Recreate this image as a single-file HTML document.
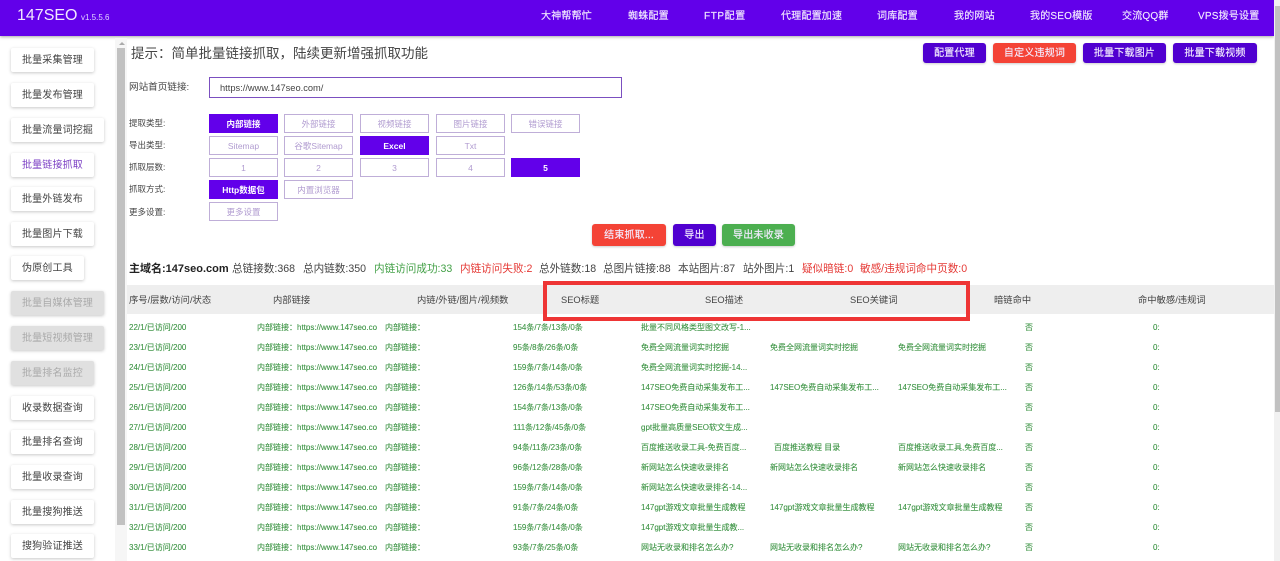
<!DOCTYPE html>
<html lang="zh-CN"><head><meta charset="utf-8"><title>147SEO</title>
<style>
html,body{margin:0;padding:0;width:1280px;height:561px;overflow:hidden;background:#fff}
body{position:relative;font-family:"Liberation Sans","Noto Sans CJK SC",sans-serif;color:#333;filter:blur(.3px)}
.a{position:absolute;white-space:nowrap}
#hd{left:0;top:0;width:1274px;height:36px;background:#6200ea;box-shadow:0 1px 3px rgba(0,0,0,.35)}
.n{top:7px;line-height:20px;font-size:10px;letter-spacing:.2px;color:#f1e8ff;-webkit-text-stroke:.15px #f1e8ff}
.s{left:11px;height:24px;line-height:25px;background:#fff;box-shadow:0 1px 3px rgba(0,0,0,.22);border-radius:2px;font-size:10px;letter-spacing:.15px;color:#444;padding-left:11px;box-sizing:border-box}
.s.d{background:#e0e0e0;color:#aaa}
.s.o{color:#7b3fc4}
.t{height:20px;top:43px;line-height:21px;border-radius:3px;color:#f3ecff;font-size:10px;letter-spacing:.2px;text-align:center;box-shadow:0 1px 2px rgba(0,0,0,.2);-webkit-text-stroke:.15px #f3ecff}
.l{left:129px;font-size:8.5px;line-height:16px;color:#444}
.b{width:69px;height:19px;line-height:18px;box-sizing:border-box;border:1px solid #bfaed8;color:#b09bd0;font-size:8.5px;text-align:center}
.b.on{background:#6200ea;border-color:#6200ea;color:#fff;font-weight:bold}
.st{top:261px;line-height:16px;font-size:10.6px;color:#444}
.h{top:292px;line-height:16px;font-size:9.3px;color:#444}
.r{left:0;width:1272px;height:20px;line-height:20px;font-size:8px;color:#3c9444;-webkit-text-stroke:.1px #3c9444;margin-top:1px}
.r span{position:absolute;top:0;white-space:nowrap}
.r .c1{left:129px}.r .c2{left:257px}.r .c3{left:385px}.r .c4{left:513px}.r .c5{left:641px}.r .c6{left:770px}.r .c7{left:898px}.r .c8{left:1025px}.r .c9{left:1153px}
</style></head><body>

<div class="a" id="hd"></div>
<div class="a" style="left:17px;top:6px;font-size:16px;line-height:20px;color:#f1e8ff">147SEO</div>
<div class="a" style="left:81px;top:11px;font-size:8px;line-height:14px;color:#e2d2ff">v1.5.5.6</div>
<div class="a n" style="left:541px">大神帮帮忙</div>
<div class="a n" style="left:628px">蜘蛛配置</div>
<div class="a n" style="left:704px;letter-spacing:.6px">FTP配置</div>
<div class="a n" style="left:781px">代理配置加速</div>
<div class="a n" style="left:877px">词库配置</div>
<div class="a n" style="left:954px">我的网站</div>
<div class="a n" style="left:1030px">我的SEO模版</div>
<div class="a n" style="left:1122px">交流QQ群</div>
<div class="a n" style="left:1198px">VPS拨号设置</div>

<div class="a" style="left:115px;top:38px;width:12px;height:523px;background:#f6f6f6"></div>
<div class="a" style="left:117px;top:48px;width:8px;height:477px;background:#c1c1c1"></div>
<div class="a" style="left:119px;top:42px;width:0;height:0;border:3px solid transparent;border-top:0;border-bottom:3px solid #aaa"></div>
<div class="a" style="left:1274px;top:0;width:6px;height:561px;background:#f1f1f1"></div>
<div class="a" style="left:1275px;top:6px;width:5px;height:406px;background:#c1c1c1"></div>

<div class="a s" style="top:48px;width:83px">批量采集管理</div>
<div class="a s" style="top:83px;width:83px">批量发布管理</div>
<div class="a s" style="top:118px;width:93px">批量流量词挖掘</div>
<div class="a s o" style="top:153px;width:83px">批量链接抓取</div>
<div class="a s" style="top:187px;width:83px">批量外链发布</div>
<div class="a s" style="top:222px;width:83px">批量图片下载</div>
<div class="a s" style="top:256px;width:73px">伪原创工具</div>
<div class="a s d" style="top:291px;width:93px">批量自媒体管理</div>
<div class="a s d" style="top:326px;width:93px">批量短视频管理</div>
<div class="a s d" style="top:361px;width:83px">批量排名监控</div>
<div class="a s" style="top:396px;width:83px">收录数据查询</div>
<div class="a s" style="top:430px;width:83px">批量排名查询</div>
<div class="a s" style="top:465px;width:83px">批量收录查询</div>
<div class="a s" style="top:500px;width:83px">批量搜狗推送</div>
<div class="a s" style="top:534px;width:83px">搜狗验证推送</div>

<div class="a" style="left:131px;top:44px;font-size:13.5px;line-height:20px;color:#444">提示：简单批量链接抓取，陆续更新增强抓取功能</div>

<div class="a t" style="left:923px;width:63px;background:#5000d0">配置代理</div>
<div class="a t" style="left:993px;width:83px;background:#f44336">自定义违规词</div>
<div class="a t" style="left:1083px;width:83px;background:#5000d0">批量下载图片</div>
<div class="a t" style="left:1173px;width:84px;background:#5000d0">批量下载视频</div>

<div class="a" style="left:129px;top:80px;font-size:9.6px;line-height:16px;color:#444">网站首页链接:</div>
<div class="a" style="left:209px;top:77px;width:413px;height:21px;box-sizing:border-box;border:1px solid #7b4fc0"></div>
<div class="a" style="left:220px;top:80px;font-size:9.3px;line-height:16px;color:#444">https://www.147seo.com/</div>

<div class="a l" style="top:115px">提取类型:</div>
<div class="a l" style="top:137px">导出类型:</div>
<div class="a l" style="top:159px">抓取层数:</div>
<div class="a l" style="top:181px">抓取方式:</div>
<div class="a l" style="top:204px">更多设置:</div>

<div class="a b on" style="left:209px;top:114px">内部链接</div>
<div class="a b" style="left:284px;top:114px">外部链接</div>
<div class="a b" style="left:360px;top:114px">视频链接</div>
<div class="a b" style="left:436px;top:114px">图片链接</div>
<div class="a b" style="left:511px;top:114px">错误链接</div>
<div class="a b" style="left:209px;top:136px">Sitemap</div>
<div class="a b" style="left:284px;top:136px">谷歌Sitemap</div>
<div class="a b on" style="left:360px;top:136px">Excel</div>
<div class="a b" style="left:436px;top:136px">Txt</div>
<div class="a b" style="left:209px;top:158px">1</div>
<div class="a b" style="left:284px;top:158px">2</div>
<div class="a b" style="left:360px;top:158px">3</div>
<div class="a b" style="left:436px;top:158px">4</div>
<div class="a b on" style="left:511px;top:158px">5</div>
<div class="a b on" style="left:209px;top:180px">Http数据包</div>
<div class="a b" style="left:284px;top:180px">内置浏览器</div>
<div class="a b" style="left:209px;top:202px">更多设置</div>

<div class="a t" style="left:592px;top:224px;width:74px;height:22px;line-height:23px;background:#f44336">结束抓取...</div>
<div class="a t" style="left:673px;top:224px;width:43px;height:22px;line-height:23px;background:#5000d0">导出</div>
<div class="a t" style="left:722px;top:224px;width:73px;height:22px;line-height:23px;background:#4caf50">导出未收录</div>

<div class="a st" style="left:129px;font-size:11px;font-weight:bold;color:#222">主域名:147seo.com</div>
<div class="a st" style="left:232px">总链接数:368</div>
<div class="a st" style="left:303px">总内链数:350</div>
<div class="a st" style="left:374px;color:#43a047">内链访问成功:33</div>
<div class="a st" style="left:460px;color:#e53935">内链访问失败:2</div>
<div class="a st" style="left:539px">总外链数:18</div>
<div class="a st" style="left:603px">总图片链接:88</div>
<div class="a st" style="left:678px">本站图片:87</div>
<div class="a st" style="left:743px">站外图片:1</div>
<div class="a st" style="left:802px;color:#e53935">疑似暗链:0</div>
<div class="a st" style="left:860px;color:#e53935">敏感/违规词命中页数:0</div>

<div class="a" style="left:127px;top:285px;width:1147px;height:29px;background:#eee"></div>
<div class="a h" style="left:129px">序号/层数/访问/状态</div>
<div class="a h" style="left:273px">内部链接</div>
<div class="a h" style="left:417px">内链/外链/图片/视频数</div>
<div class="a h" style="left:561px">SEO标题</div>
<div class="a h" style="left:705px">SEO描述</div>
<div class="a h" style="left:850px">SEO关键词</div>
<div class="a h" style="left:994px">暗链命中</div>
<div class="a h" style="left:1138px">命中敏感/违规词</div>
<div class="a" style="left:543px;top:281px;width:427px;height:40px;box-sizing:border-box;border:4px solid #ee3535"></div>

<div class="a r" style="top:317px"><span class="c1">22/1/已访问/200</span><span class="c2">内部链接：https://www.147seo.co</span><span class="c3">内部链接：</span><span class="c4">154条/7条/13条/0条</span><span class="c5">批量不同风格类型图文改写-1...</span><span class="c8">否</span><span class="c9">0:</span></div>
<div class="a r" style="top:337px"><span class="c1">23/1/已访问/200</span><span class="c2">内部链接：https://www.147seo.co</span><span class="c3">内部链接：</span><span class="c4">95条/8条/26条/0条</span><span class="c5">免费全网流量词实时挖掘</span><span class="c6">免费全网流量词实时挖掘</span><span class="c7">免费全网流量词实时挖掘</span><span class="c8">否</span><span class="c9">0:</span></div>
<div class="a r" style="top:357px"><span class="c1">24/1/已访问/200</span><span class="c2">内部链接：https://www.147seo.co</span><span class="c3">内部链接：</span><span class="c4">159条/7条/14条/0条</span><span class="c5">免费全网流量词实时挖掘-14...</span><span class="c8">否</span><span class="c9">0:</span></div>
<div class="a r" style="top:377px"><span class="c1">25/1/已访问/200</span><span class="c2">内部链接：https://www.147seo.co</span><span class="c3">内部链接：</span><span class="c4">126条/14条/53条/0条</span><span class="c5">147SEO免费自动采集发布工...</span><span class="c6">147SEO免费自动采集发布工...</span><span class="c7">147SEO免费自动采集发布工...</span><span class="c8">否</span><span class="c9">0:</span></div>
<div class="a r" style="top:397px"><span class="c1">26/1/已访问/200</span><span class="c2">内部链接：https://www.147seo.co</span><span class="c3">内部链接：</span><span class="c4">154条/7条/13条/0条</span><span class="c5">147SEO免费自动采集发布工...</span><span class="c8">否</span><span class="c9">0:</span></div>
<div class="a r" style="top:417px"><span class="c1">27/1/已访问/200</span><span class="c2">内部链接：https://www.147seo.co</span><span class="c3">内部链接：</span><span class="c4">111条/12条/45条/0条</span><span class="c5">gpt批量高质量SEO软文生成...</span><span class="c8">否</span><span class="c9">0:</span></div>
<div class="a r" style="top:437px"><span class="c1">28/1/已访问/200</span><span class="c2">内部链接：https://www.147seo.co</span><span class="c3">内部链接：</span><span class="c4">94条/11条/23条/0条</span><span class="c5">百度推送收录工具-免费百度...</span><span class="c6" style="left:774px">百度推送教程 目录</span><span class="c7">百度推送收录工具,免费百度...</span><span class="c8">否</span><span class="c9">0:</span></div>
<div class="a r" style="top:457px"><span class="c1">29/1/已访问/200</span><span class="c2">内部链接：https://www.147seo.co</span><span class="c3">内部链接：</span><span class="c4">96条/12条/28条/0条</span><span class="c5">新网站怎么快速收录排名</span><span class="c6">新网站怎么快速收录排名</span><span class="c7">新网站怎么快速收录排名</span><span class="c8">否</span><span class="c9">0:</span></div>
<div class="a r" style="top:477px"><span class="c1">30/1/已访问/200</span><span class="c2">内部链接：https://www.147seo.co</span><span class="c3">内部链接：</span><span class="c4">159条/7条/14条/0条</span><span class="c5">新网站怎么快速收录排名-14...</span><span class="c8">否</span><span class="c9">0:</span></div>
<div class="a r" style="top:497px"><span class="c1">31/1/已访问/200</span><span class="c2">内部链接：https://www.147seo.co</span><span class="c3">内部链接：</span><span class="c4">91条/7条/24条/0条</span><span class="c5">147gpt游戏文章批量生成教程</span><span class="c6">147gpt游戏文章批量生成教程</span><span class="c7">147gpt游戏文章批量生成教程</span><span class="c8">否</span><span class="c9">0:</span></div>
<div class="a r" style="top:517px"><span class="c1">32/1/已访问/200</span><span class="c2">内部链接：https://www.147seo.co</span><span class="c3">内部链接：</span><span class="c4">159条/7条/14条/0条</span><span class="c5">147gpt游戏文章批量生成教...</span><span class="c8">否</span><span class="c9">0:</span></div>
<div class="a r" style="top:537px"><span class="c1">33/1/已访问/200</span><span class="c2">内部链接：https://www.147seo.co</span><span class="c3">内部链接：</span><span class="c4">93条/7条/25条/0条</span><span class="c5">网站无收录和排名怎么办?</span><span class="c6">网站无收录和排名怎么办?</span><span class="c7">网站无收录和排名怎么办?</span><span class="c8">否</span><span class="c9">0:</span></div>

</body></html>
